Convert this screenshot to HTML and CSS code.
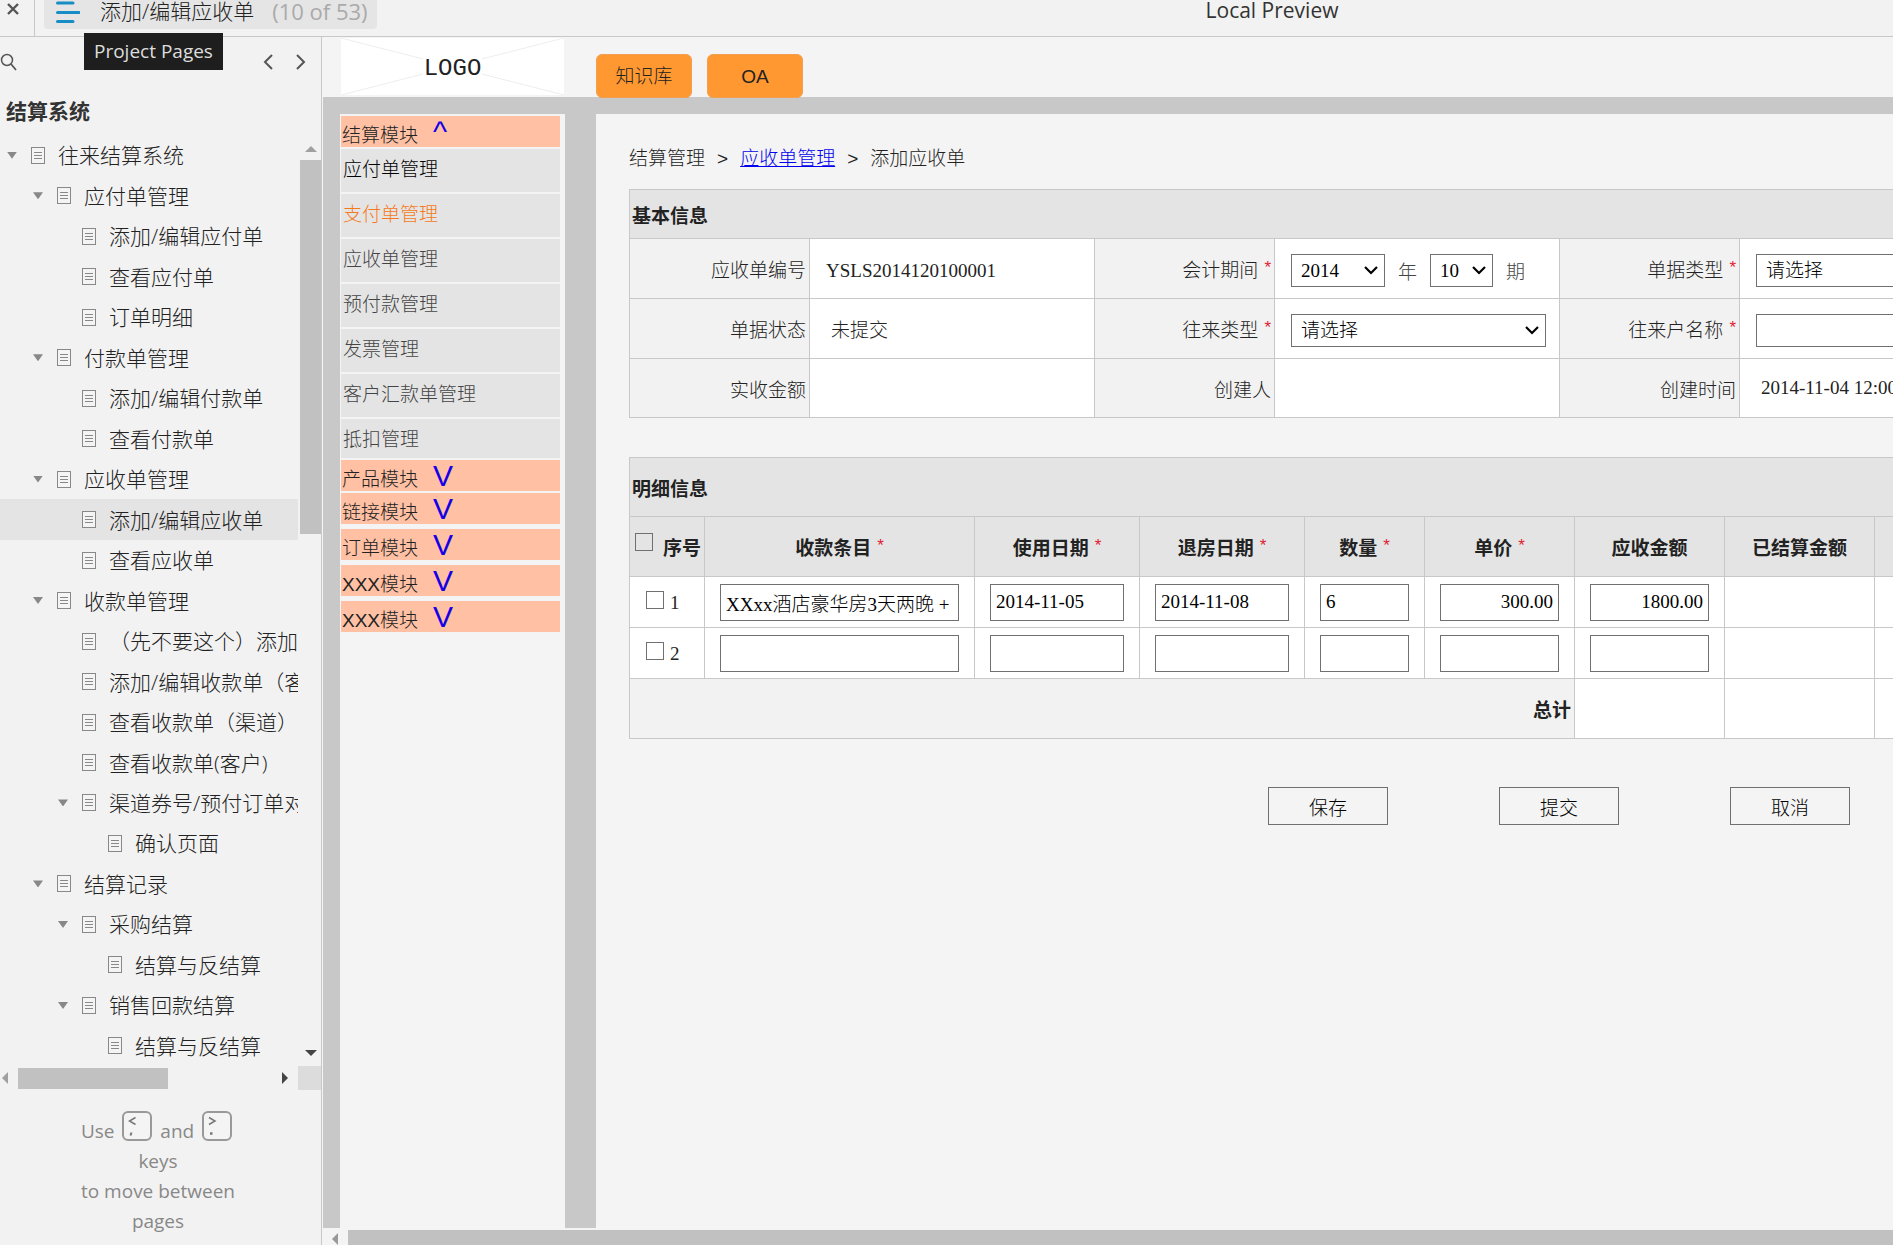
FILE: index.html
```
<!DOCTYPE html>
<html lang="zh-CN">
<head>
    <meta charset="UTF-8">
    <meta name="viewport" content="width=device-width, initial-scale=1.0">
    <title>添加/编辑应收单</title>
    <link rel="stylesheet" href="styles.css">
</head>
<body>
    <svg class="defs" width="0" height="0">
        <symbol id="page" viewBox="0 0 14 17">
            <rect x="0.5" y="0.5" width="13" height="16" fill="#f4f4f4" stroke="#888"/>
            <path d="M3 5.500h8M3 8.500h8M3 11.500h8" stroke="#888" fill="none"/>
        </symbol>
    </svg>

    <header class="topbar">
        <button class="close" aria-label="Close">
            <svg width="14" height="14" viewBox="0 0 14 14"><path d="M2 2l10 10M12 2L2 12" stroke="#555" stroke-width="2.4"/></svg>
        </button>
        <button class="pages-tab">
            <svg width="24" height="24" viewBox="0 0 24 24"><path d="M1.500 3H17M1.500 12.500H23M1.500 21.500H17" stroke="#168dc4" stroke-width="3" stroke-linecap="round"/></svg>
            <span class="page-name">添加/编辑应收单</span>
            <span class="page-count">(10 of 53)</span>
        </button>
        <span class="tooltip">Project Pages</span>
        <span class="preview">Local Preview</span>
    </header>

    <div class="workspace">
        <aside class="sidebar">
            <div class="tools">
                <button class="search" aria-label="Search">
                    <svg width="17" height="18" viewBox="0 0 17 18"><circle cx="7" cy="7" r="5.500" fill="none" stroke="#555" stroke-width="1.500"/><path d="M11 11l5 6" stroke="#555" stroke-width="1.800"/></svg>
                </button>
                <button class="step" aria-label="Previous page">
                    <svg width="10" height="16" viewBox="0 0 10 16"><path d="M9 1L2 8l7 7" fill="none" stroke="#555" stroke-width="2"/></svg>
                </button>
                <button class="step" aria-label="Next page">
                    <svg width="10" height="16" viewBox="0 0 10 16"><path d="M1 1l7 7-7 7" fill="none" stroke="#555" stroke-width="2"/></svg>
                </button>
            </div>
            <h1 class="project">结算系统</h1>

            <div class="tree-box">
                <nav class="tree">
                    <a href="#" class="node l1 open"><svg><use href="#page"/></svg>往来结算系统</a>
                    <a href="#" class="node l2 open"><svg><use href="#page"/></svg>应付单管理</a>
                    <a href="#" class="node l3"><svg><use href="#page"/></svg>添加/编辑应付单</a>
                    <a href="#" class="node l3"><svg><use href="#page"/></svg>查看应付单</a>
                    <a href="#" class="node l3"><svg><use href="#page"/></svg>订单明细</a>
                    <a href="#" class="node l2 open"><svg><use href="#page"/></svg>付款单管理</a>
                    <a href="#" class="node l3"><svg><use href="#page"/></svg>添加/编辑付款单</a>
                    <a href="#" class="node l3"><svg><use href="#page"/></svg>查看付款单</a>
                    <a href="#" class="node l2 open"><svg><use href="#page"/></svg>应收单管理</a>
                    <a href="#" class="node l3 current"><svg><use href="#page"/></svg>添加/编辑应收单</a>
                    <a href="#" class="node l3"><svg><use href="#page"/></svg>查看应收单</a>
                    <a href="#" class="node l2 open"><svg><use href="#page"/></svg>收款单管理</a>
                    <a href="#" class="node l3"><svg><use href="#page"/></svg>（先不要这个）添加</a>
                    <a href="#" class="node l3"><svg><use href="#page"/></svg>添加/编辑收款单（客</a>
                    <a href="#" class="node l3"><svg><use href="#page"/></svg>查看收款单（渠道）</a>
                    <a href="#" class="node l3"><svg><use href="#page"/></svg>查看收款单(客户)</a>
                    <a href="#" class="node l3 open"><svg><use href="#page"/></svg>渠道券号/预付订单对</a>
                    <a href="#" class="node l4"><svg><use href="#page"/></svg>确认页面</a>
                    <a href="#" class="node l2 open"><svg><use href="#page"/></svg>结算记录</a>
                    <a href="#" class="node l3 open"><svg><use href="#page"/></svg>采购结算</a>
                    <a href="#" class="node l4"><svg><use href="#page"/></svg>结算与反结算</a>
                    <a href="#" class="node l3 open"><svg><use href="#page"/></svg>销售回款结算</a>
                    <a href="#" class="node l4"><svg><use href="#page"/></svg>结算与反结算</a>
                </nav>
                <div class="vbar">
                    <svg width="12" height="7" viewBox="0 0 12 7"><path d="M0 7l6-6 6 6z" fill="#a0a0a0"/></svg>
                    <div class="vthumb"></div>
                    <svg class="end" width="12" height="7" viewBox="0 0 12 7"><path d="M0 0l6 6 6-6z" fill="#444"/></svg>
                </div>
            </div>
            <div class="hbar">
                <svg width="7" height="12" viewBox="0 0 7 12"><path d="M7 0L1 6l6 6z" fill="#a0a0a0"/></svg>
                <div class="hthumb"></div>
                <svg class="end" width="7" height="12" viewBox="0 0 7 12"><path d="M0 0l6 6-6 6z" fill="#444"/></svg>
                <div class="corner"></div>
            </div>

            <p class="hint">
                Use
                <svg class="key" width="30" height="30" viewBox="0 0 30 30"><rect x="1" y="1" width="28" height="28" rx="5" fill="#f4f4f4" stroke="#999" stroke-width="2"/><path d="M13.500 6.500L7.500 10l6 3.500" fill="none" stroke="#777" stroke-width="1.500"/><path d="M9.500 21.500l-1 3" stroke="#777" stroke-width="2"/></svg>
                and
                <svg class="key" width="30" height="30" viewBox="0 0 30 30"><rect x="1" y="1" width="28" height="28" rx="5" fill="#f4f4f4" stroke="#999" stroke-width="2"/><path d="M7 6.500l6 3.500-6 3.500" fill="none" stroke="#777" stroke-width="1.500"/><path d="M8 22.500h2.500" stroke="#777" stroke-width="2.500"/></svg>
                <br>keys<br>to move between<br>pages
            </p>
        </aside>

        <main class="canvas">
            <div class="site-head">
                <div class="logo">
                    <svg viewBox="0 0 223 57" preserveAspectRatio="none"><path d="M0 0l223 57M223 0L0 57" stroke="#ededed"/></svg>
                    <span>LOGO</span>
                </div>
                <a href="#" class="app">知识库</a>
                <a href="#" class="app">OA</a>
            </div>

            <div class="frame">
                <nav class="menu">
                    <a href="#" class="module">结算模块<b class="mark">^</b></a>
                    <a href="#" class="item dark">应付单管理</a>
                    <a href="#" class="item active">支付单管理</a>
                    <a href="#" class="item">应收单管理</a>
                    <a href="#" class="item">预付款管理</a>
                    <a href="#" class="item">发票管理</a>
                    <a href="#" class="item">客户汇款单管理</a>
                    <a href="#" class="item">抵扣管理</a>
                    <a href="#" class="module">产品模块<span class="mark">V</span></a>
                    <a href="#" class="module">链接模块<span class="mark">V</span></a>
                    <a href="#" class="module spaced">订单模块<span class="mark">V</span></a>
                    <a href="#" class="module spaced">XXX模块<span class="mark">V</span></a>
                    <a href="#" class="module spaced">XXX模块<span class="mark">V</span></a>
                </nav>

                <section class="content">
                    <div class="crumbs">结算管理<span class="sep">&gt;</span><a href="#">应收单管理</a><span class="sep">&gt;</span>添加应收单</div>

                    <table class="info">
                        <colgroup>
                            <col class="w180"><col class="w285"><col class="w180"><col class="w285"><col class="w180"><col class="w285">
                        </colgroup>
                        <tr class="caption"><th colspan="6">基本信息</th></tr>
                        <tr>
                            <th>应收单编号</th>
                            <td class="song">YSLS2014120100001</td>
                            <th><label for="year">会计期间<i>*</i></label></th>
                            <td>
                                <div class="period">
                                    <select id="year" class="year"><option>2014</option></select>
                                    <span>年</span>
                                    <select class="month" aria-label="期"><option>10</option></select>
                                    <span>期</span>
                                </div>
                            </td>
                            <th><label for="kind">单据类型<i>*</i></label></th>
                            <td><select id="kind" class="wide"><option>请选择</option></select></td>
                        </tr>
                        <tr>
                            <th>单据状态</th>
                            <td class="song state">未提交</td>
                            <th><label for="deal">往来类型<i>*</i></label></th>
                            <td><select id="deal" class="wide"><option>请选择</option></select></td>
                            <th><label for="account">往来户名称<i>*</i></label></th>
                            <td><input type="text" id="account" class="wide"></td>
                        </tr>
                        <tr class="last">
                            <th>实收金额</th>
                            <td></td>
                            <th>创建人</th>
                            <td></td>
                            <th>创建时间</th>
                            <td class="song time">2014-11-04 12:00:00</td>
                        </tr>
                    </table>

                    <table class="detail">
                        <colgroup>
                            <col class="w75"><col class="w270"><col class="w165"><col class="w165"><col class="w120"><col class="w150"><col class="w150"><col class="w150"><col class="w150">
                        </colgroup>
                        <tr class="caption"><th colspan="9">明细信息</th></tr>
                        <tr class="heads">
                            <th><label class="check"><input type="checkbox"><span>序号</span></label></th>
                            <th>收款条目<i>*</i></th>
                            <th>使用日期<i>*</i></th>
                            <th>退房日期<i>*</i></th>
                            <th>数量<i>*</i></th>
                            <th>单价<i>*</i></th>
                            <th>应收金额</th>
                            <th>已结算金额</th>
                            <th></th>
                        </tr>
                        <tr class="line">
                            <td><label class="check row"><input type="checkbox"><span>1</span></label></td>
                            <td><input type="text" aria-label="收款条目" value="XXxx酒店豪华房3天两晚 +"></td>
                            <td><input type="text" aria-label="使用日期" value="2014-11-05"></td>
                            <td><input type="text" aria-label="退房日期" value="2014-11-08"></td>
                            <td><input type="text" aria-label="数量" value="6"></td>
                            <td><input type="text" class="num" aria-label="单价" value="300.00"></td>
                            <td><input type="text" class="num" aria-label="应收金额" value="1800.00"></td>
                            <td></td>
                            <td></td>
                        </tr>
                        <tr class="line">
                            <td><label class="check row"><input type="checkbox"><span>2</span></label></td>
                            <td><input type="text" aria-label="收款条目"></td>
                            <td><input type="text" aria-label="使用日期"></td>
                            <td><input type="text" aria-label="退房日期"></td>
                            <td><input type="text" aria-label="数量"></td>
                            <td><input type="text" class="num" aria-label="单价"></td>
                            <td><input type="text" class="num" aria-label="应收金额"></td>
                            <td></td>
                            <td></td>
                        </tr>
                        <tr class="total">
                            <th colspan="6">总计</th>
                            <td></td>
                            <td></td>
                            <td></td>
                        </tr>
                    </table>

                    <div class="actions">
                        <button>保存</button>
                        <button>提交</button>
                        <button>取消</button>
                    </div>
                </section>
            </div>

            <div class="canvas-scroll">
                <svg width="7" height="12" viewBox="0 0 7 12"><path d="M7 0L1 6l6 6z" fill="#999"/></svg>
                <div class="canvas-thumb"></div>
            </div>
        </main>
    </div>
</body>
</html>
```
FILE: styles.css
```
* {
    box-sizing: border-box;
}
body {
    margin: 0;
    height: 100vh;
    display: flex;
    flex-direction: column;
    overflow: hidden;
    background-color: #f2f2f2;
    color: #333;
    font-family: "Open Sans", "Noto Sans CJK SC", sans-serif;
    font-size: 19px;
}
button {
    border: none;
    background: none;
    padding: 0;
    color: inherit;
    font: inherit;
    cursor: pointer;
}
a {
    color: inherit;
    text-decoration: none;
}
svg {
    display: block;
    flex: none;
}
.defs {
    position: absolute;
}

/* top bar */
.topbar {
    position: relative;
    flex: none;
    height: 37px;
    display: flex;
    align-items: flex-start;
    border-bottom: 1px solid #c8c8c8;
}
.close {
    width: 35px;
    height: 36px;
    padding: 2px 0 0 6px;
    display: flex;
    border-right: 1px solid #c8c8c8;
}
.pages-tab {
    height: 29px;
    margin-left: 9px;
    padding: 0 9px 6px 12px;
    display: flex;
    align-items: center;
    background-color: #e5e5e5;
    border-radius: 0 0 4px 4px;
    font-size: 21px;
    line-height: 23px;
}
.page-name {
    margin-left: 20px;
    font-weight: 300;
    color: #222;
}
.page-count {
    margin-left: 18px;
    color: #aaa;
    font-size: 22px;
}
.preview {
    flex: 1;
    padding-left: 829px;
    font-size: 21px;
    line-height: 21px;
    white-space: nowrap;
}
.tooltip {
    position: absolute;
    left: 84px;
    top: 33px;
    z-index: 2;
    padding: 0 10px;
    background-color: #1e1e1e;
    color: #ddd;
    line-height: 37px;
}

/* project sidebar */
.workspace {
    flex: 1;
    min-height: 0;
    display: flex;
}
.sidebar {
    flex: none;
    width: 322px;
    display: flex;
    flex-direction: column;
    border-right: 1px solid #c8c8c8;
}
.tools {
    display: flex;
    align-items: center;
    gap: 23px;
    height: 50px;
    padding-right: 15px;
}
.search {
    margin-right: auto;
}
.project {
    margin: 0;
    padding-left: 6px;
    height: 48px;
    font-size: 21px;
    line-height: 49px;
}
.tree-box {
    flex: 1;
    min-height: 0;
    display: flex;
}
.tree {
    flex: 1;
    min-width: 0;
    display: flex;
    flex-direction: column;
    overflow: hidden;
    color: #222;
    font-size: 21px;
    font-weight: 300;
}
.node {
    flex: 1;
    display: flex;
    align-items: center;
    white-space: nowrap;
    line-height: 30px;
}
.node svg {
    width: 14px;
    height: 17px;
    margin-right: 13px;
}
.node::before {
    content: "";
    width: 10px;
    height: 7px;
    margin: 0 14px 0 7px;
    flex: none;
}
.node.open::before {
    background-color: #888;
    clip-path: polygon(0 0, 100% 0, 50% 100%);
}
.l2 {
    padding-left: 26px;
}
.l3 {
    padding-left: 51px;
}
.l4 {
    padding-left: 77px;
}
.current {
    background-color: #e4e4e4;
}
.vbar {
    flex: none;
    width: 23px;
    padding: 10px 0 9px 2px;
    display: flex;
    flex-direction: column;
    align-items: center;
}
.vthumb {
    width: 21px;
    height: 41%;
    margin-top: 8px;
    background-color: #c1c1c1;
}
.vbar .end {
    margin-top: auto;
}
.hbar {
    flex: none;
    height: 24px;
    display: flex;
    align-items: center;
    padding-left: 1px;
}
.hthumb {
    width: 150px;
    height: 21px;
    margin-left: 10px;
    background-color: #c1c1c1;
}
.hbar .end {
    margin-left: auto;
}
.corner {
    width: 23px;
    height: 24px;
    margin-left: 9px;
    background-color: #dcdcdc;
}
.hint {
    flex: none;
    margin: 0;
    padding: 21px 5px 9px 0;
    color: #888;
    line-height: 30px;
    text-align: center;
}
.key {
    display: inline-block;
    margin: 0 3px;
    vertical-align: -3px;
}

/* prototype page */
.canvas {
    flex: 1;
    min-width: 0;
    display: flex;
    flex-direction: column;
    padding-left: 1px;
    background-color: #f4f4f4;
    color: #222;
    font-family: "Liberation Sans", "Noto Sans CJK SC", sans-serif;
    font-weight: 300;
}
.site-head {
    flex: none;
    height: 60px;
    display: flex;
    align-items: flex-end;
    padding-left: 18px;
}
.logo {
    display: grid;
    place-items: center;
    width: 223px;
    height: 57px;
    margin: 0 17px 2px 0;
    background-color: #fff;
    font-family: "Liberation Mono", monospace;
    font-size: 24px;
}
.logo svg, .logo span {
    grid-area: 1 / 1;
}
.logo svg {
    width: 100%;
    height: 100%;
}
.logo span {
    padding: 3px 1px 0;
    background-color: #fff;
}
.app {
    width: 96px;
    height: 44px;
    margin: 0 0 -1px 15px;
    background-color: #ff9830;
    border: 1px solid #f0a050;
    border-radius: 6px;
    line-height: 43px;
    text-align: center;
    z-index: 1;
}
.frame {
    flex: 1;
    min-height: 0;
    display: flex;
    gap: 31px;
    padding: 17px 0 0 17px;
    background-color: #c8c8c8;
}
.menu {
    flex: none;
    width: 225px;
    display: flex;
    flex-direction: column;
    padding: 2px 5px 0 1px;
    background-color: #f4f4f4;
}
.module {
    height: 31px;
    margin-bottom: 2px;
    padding-left: 1px;
    display: flex;
    align-items: baseline;
    background-color: #ffc0a4;
    line-height: 31px;
}
.module.spaced {
    margin: 3px 0 2px;
}
.mark {
    margin-left: 15px;
    color: #1400e6;
    font-size: 30px;
    font-weight: 400;
}
.item {
    height: 43px;
    margin-bottom: 2px;
    padding-left: 2px;
    background-color: #e4e4e4;
    color: #444;
    line-height: 41px;
}
.item:nth-child(8) {
    height: 39px;
}
.item.dark {
    color: #000;
}
.item.active {
    color: #f47a20;
}
.content {
    flex: 1;
    min-width: 0;
    overflow: hidden;
    padding: 30px 0 0 33px;
    background-color: #f4f4f4;
}
.crumbs {
    height: 45px;
    line-height: 30px;
}
.crumbs a {
    color: #0000ee;
    text-decoration: underline;
}
.sep {
    margin: 0 12px;
    font-weight: 400;
}

/* form tables */
table {
    table-layout: fixed;
    border-collapse: collapse;
}
.info {
    width: 1395px;
    margin-bottom: 39px;
}
.detail {
    width: 1395px;
}
.w75 { width: 75px; }
.w120 { width: 120px; }
.w150 { width: 150px; }
.w165 { width: 165px; }
.w180 { width: 180px; }
.w270 { width: 270px; }
.w285 { width: 285px; }
th, td {
    height: 60px;
    padding: 0 15px;
    border: 1px solid #c8c8c8;
    background-color: #fff;
    text-align: left;
}
.info td {
    padding: 4px 16px 0;
}
.info th {
    padding: 0 3px;
    background-color: #f2f2f2;
    font-weight: 300;
    text-align: right;
}
.info .last th, .info .last td {
    height: 59px;
    padding-top: 0;
}
.info .caption th, .detail .caption th {
    height: 49px;
    padding: 0 2px;
    background-color: #e4e4e4;
    font-weight: 700;
    text-align: left;
}
.detail .caption th {
    height: 59px;
}
th i {
    margin-left: 6px;
    color: #e02030;
    font-size: 17px;
    font-style: normal;
    font-weight: 400;
    line-height: 17px;
    vertical-align: 4px;
}
.song, .period, select, input {
    font-family: "Liberation Serif", "Noto Sans CJK SC", serif;
    font-size: 19px;
    font-weight: 300;
}
.info .state, .info .time {
    padding: 0 21px;
}
.period {
    display: flex;
    align-items: center;
    gap: 15px;
}
.period span {
    width: 15px;
    display: flex;
    justify-content: center;
    color: #444;
}
select, input[type="text"] {
    display: block;
    height: 33px;
    margin: 0;
    background-color: #fff;
    border: 1px solid #707070;
    border-radius: 0;
    color: #000;
}
select {
    appearance: none;
    padding: 0 9px;
    background: #fff url("data:image/svg+xml,%3Csvg xmlns='http://www.w3.org/2000/svg' width='14' height='9'%3E%3Cpath d='M1 1l6 6 6-6' fill='none' stroke='%23000' stroke-width='2.2'/%3E%3C/svg%3E") no-repeat right 6px center;
}
.year {
    width: 94px;
}
.month {
    width: 63px;
}
.wide {
    width: 255px;
}
.heads th {
    padding: 0 3px;
    background-color: #e4e4e4;
    text-align: center;
}
.line td {
    height: 51px;
}
.line input[type="text"] {
    width: 100%;
    height: 37px;
    padding: 0 5px;
}
.line .num {
    text-align: right;
}
.check {
    display: flex;
    align-items: center;
    justify-content: space-between;
    padding-left: 2px;
}
.check input {
    appearance: none;
    width: 18px;
    height: 18px;
    margin: 0;
    border: 1px solid #707070;
}
.heads .check {
    align-items: flex-start;
}
.check.row {
    align-items: flex-end;
    justify-content: flex-start;
    gap: 6px;
    padding-left: 1px;
    font-family: "Liberation Serif", serif;
}
.check.row input {
    margin-bottom: 5px;
}
.total th {
    padding: 0 3px;
    background-color: #f2f2f2;
    text-align: right;
}
.actions {
    display: flex;
    gap: 111px;
    padding: 48px 0 0 639px;
}
.actions button {
    flex: none;
    width: 120px;
    height: 38px;
    border: 1px solid #707070;
    color: #000;
}
.canvas-scroll {
    flex: none;
    height: 17px;
    display: flex;
    align-items: flex-end;
    gap: 10px;
    padding-left: 8px;
}
.canvas-thumb {
    flex: 1;
    height: 15px;
    background-color: #c1c1c1;
}
```
